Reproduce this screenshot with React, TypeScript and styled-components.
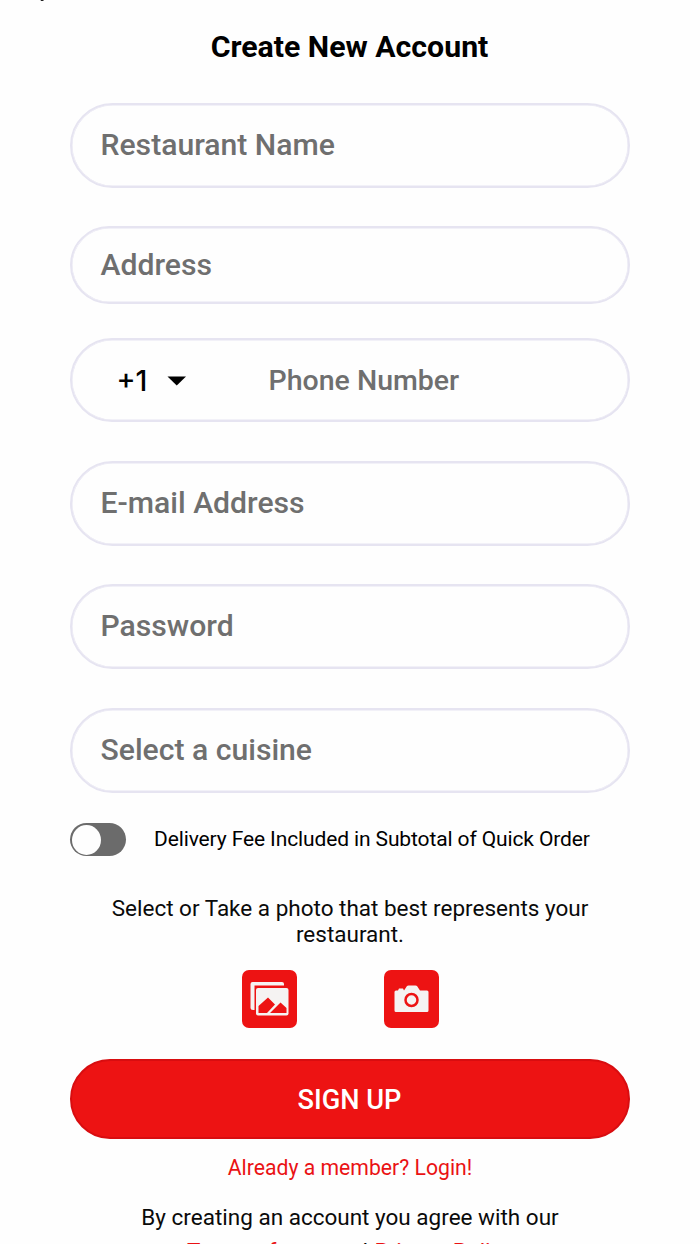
import React from "react";
import styled, { createGlobalStyle } from "styled-components";

const GlobalStyle = createGlobalStyle`
  * { box-sizing: border-box; }
  html, body { margin: 0; height: 1244px; overflow: hidden; background: #fefefe; }
  body { font-family: Roboto, "Liberation Sans", sans-serif; color: #000; }
`;

const Page = styled.main`
  width: 700px;
  height: 1244px;
  padding: 0 70px;
  overflow: hidden;
  display: flex;
  flex-direction: column;
  background: #fefefe;
`;

const TopBar = styled.header`
  flex: none;
  height: 24px;
  margin-left: -70px;
`;

const Title = styled.h1`
  flex: none;
  margin: 0 1px 0 0;
  height: 46px;
  line-height: 46px;
  font-size: 30.25px;
  font-weight: 700;
  text-align: center;
  white-space: nowrap;
`;

const Field = styled.div<{ $height: number; $gap: number; $lift?: number; $drop?: number }>`
  flex: none;
  display: flex;
  align-items: center;
  height: ${(p) => p.$height}px;
  margin-top: ${(p) => p.$gap}px;
  padding: ${(p) => p.$drop ?? 0}px 0 ${(p) => p.$lift ?? 0}px 28.5px;
  border: 2px solid #e6e4f1;
  box-shadow: inset 0 0 0 0.5px #e6e4f1;
  border-radius: 43px;
`;

const Placeholder = styled.span<{ $size?: number }>`
  color: #6f6f6f;
  font-size: ${(p) => p.$size ?? 30.15}px;
  font-weight: 500;
  line-height: 40px;
  white-space: nowrap;
`;

const CountryCode = styled.div`
  display: flex;
  align-items: center;
  width: 168px;
  padding-left: 16px;
  gap: 20px;
  font-family: Inter, sans-serif;
  font-size: 28.5px;
  font-weight: 500;
  line-height: 40px;
`;

const ToggleRow = styled.div`
  flex: none;
  display: flex;
  align-items: center;
  gap: 28px;
  height: 33px;
  margin-top: 30px;
`;

const Toggle = styled.div`
  flex: none;
  width: 56px;
  height: 33px;
  padding: 1.5px;
  border-radius: 17px;
  background: #6b6b6b;
`;

const Knob = styled.div`
  width: 29px;
  height: 30px;
  border-radius: 50%;
  background: #fefefe;
`;

const ToggleLabel = styled.span`
  padding-bottom: 1px;
  font-size: 21px;
  line-height: 26px;
  letter-spacing: -0.12px;
  white-space: nowrap;
`;

const Text = styled.p<{ $top: number; $red?: boolean; $size?: number }>`
  flex: none;
  margin: ${(p) => p.$top}px -20px 0;
  font-size: ${(p) => p.$size ?? 22.5}px;
  line-height: 26px;
  text-align: center;
  white-space: nowrap;
  color: ${(p) => (p.$red ? "#ea1214" : "#0a0a0a")};
`;

const PhotoButtons = styled.div`
  flex: none;
  display: flex;
  justify-content: center;
  gap: 87px;
  margin: 23px 20px 0 0;
`;

const PhotoButton = styled.div`
  display: flex;
  width: 55px;
  height: 58px;
  border-radius: 7px;
  background: #ed1313;
`;

const SignUp = styled.div`
  flex: none;
  display: flex;
  align-items: center;
  justify-content: center;
  height: 80px;
  margin-top: 31px;
  padding: 2px 1px 0 0;
  border: 2px solid #d80d10;
  border-radius: 41px;
  background: #ed1313;
  color: #fff;
  font-size: 27.2px;
  font-weight: 500;
`;

const Link = styled.span`
  color: #ea1214;
`;

const Conjunction = styled.span`
  margin: 0 1px 0 7px;
`;

export default function App() {
  return (
    <>
      <GlobalStyle />
      <Page>
        <TopBar>
          <svg width="60" height="24" viewBox="0 0 60 24" display="block">
            <path d="M40.5 0H43.5V1H41Z" fill="#222" />
          </svg>
        </TopBar>
        <Title>Create New Account</Title>
        <Field $height={85} $gap={33} $lift={1}><Placeholder>Restaurant Name</Placeholder></Field>
        <Field $height={78} $gap={38}><Placeholder>Address</Placeholder></Field>
        <Field $height={84} $gap={34} $drop={2}>
          <CountryCode>
            <span>+1</span>
            <svg width="19" height="10" viewBox="0 0 19 10"><path d="M0.5 0.5H19L9.75 9.5Z" /></svg>
          </CountryCode>
          <Placeholder $size={28.5}>Phone Number</Placeholder>
        </Field>
        <Field $height={85} $gap={39} $lift={1}><Placeholder>E-mail Address</Placeholder></Field>
        <Field $height={85} $gap={38} $lift={1}><Placeholder>Password</Placeholder></Field>
        <Field $height={85} $gap={39} $lift={1}><Placeholder>Select a cuisine</Placeholder></Field>
        <ToggleRow>
          <Toggle><Knob /></Toggle>
          <ToggleLabel>Delivery Fee Included in Subtotal of Quick Order</ToggleLabel>
        </ToggleRow>
        <Text $top={39}>
          Select or Take a photo that best represents your<br />restaurant.
        </Text>
        <PhotoButtons>
          <PhotoButton>
            <svg width="55" height="58" viewBox="0 0 55 58">
              <path d="M11 40Q8.5 40 8.5 38V14Q8.5 12 10.5 12H40Q42 12 42 14V15.5H12.5V40Z" fill="#f5f3f2" />
              <rect x="14" y="18" width="32.5" height="27.5" rx="2" fill="#f5f3f2" />
              <path d="M16.5 43V36L26 27.5L33 34.5L25 43ZM28 43L38.5 32.5L44.5 38V43Z" fill="#ed1313" />
            </svg>
          </PhotoButton>
          <PhotoButton>
            <svg width="55" height="58" viewBox="0 0 55 58">
              <path d="M12 20.5H14L15 18.5H19L20 20.5L23 16Q23.5 15.5 24.5 15.5H31.5Q32.5 15.5 33 16L36 20.5H43Q44.5 20.5 44.5 22V40.5Q44.5 42 43 42H12Q10.5 42 10.5 40.5V22Q10.5 20.5 12 20.5Z" fill="#f5f3f2" />
              <circle cx="27.5" cy="30" r="6" fill="none" stroke="#ed1313" strokeWidth="2.5" />
            </svg>
          </PhotoButton>
        </PhotoButtons>
        <SignUp>SIGN UP</SignUp>
        <Text $top={16} $red $size={21.2}>Already a member? Login!</Text>
        <Text $top={23}>By creating an account you agree with our</Text>
        <Text $top={8}>
          <Link>Terms of use</Link>
          <Conjunction> and </Conjunction>
          <Link>Privacy Policy</Link>
        </Text>
      </Page>
    </>
  );
}
